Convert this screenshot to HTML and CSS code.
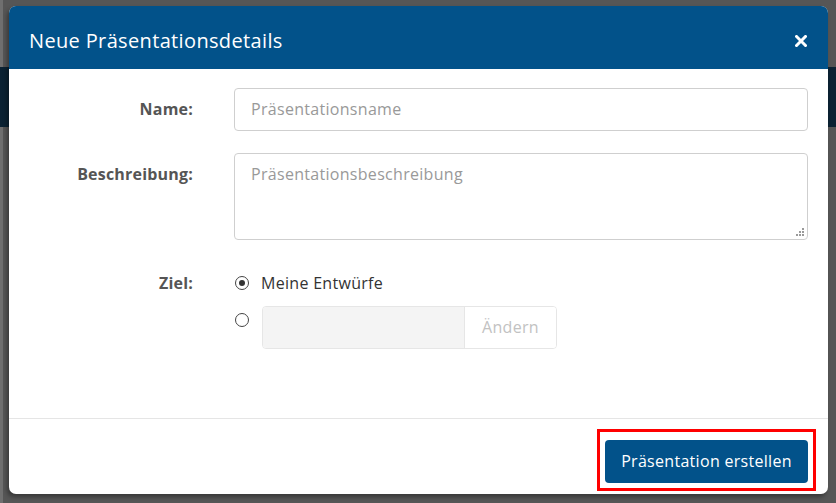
FILE: index.html
```html
<!DOCTYPE html>
<html lang="de">
<head>
<meta charset="utf-8">
<title>Neue Präsentationsdetails</title>
<link rel="stylesheet" href="styles.css">
</head>
<body>
<div class="page">
  <div class="page-topbar"></div>
  <div class="page-navbar"></div>
</div>
<div class="modal">
  <div class="modal-header">
    <h1 class="modal-title">Neue Präsentationsdetails</h1>
    <button class="modal-close" aria-label="Schließen">
      <svg width="12" height="12" viewBox="0 0 12 12"><path d="M1.5 1.5 L10.5 10.5 M10.5 1.5 L1.5 10.5" stroke="#fff" stroke-width="3" stroke-linecap="square"/></svg>
    </button>
  </div>
  <div class="modal-body">
    <label class="form-label label-name">Name:</label>
    <div class="field"><div class="input">Präsentationsname</div></div>

    <label class="form-label label-desc">Beschreibung:</label>
    <div class="field"><div class="textarea">Präsentationsbeschreibung<span class="grip">
      <svg width="8" height="8" viewBox="0 0 8 8"><g fill="#9a9a9a"><rect x="6" y="0" width="2" height="2"/><rect x="3" y="3" width="2" height="2"/><rect x="6" y="3" width="2" height="2"/><rect x="0" y="6" width="2" height="2"/><rect x="3" y="6" width="2" height="2"/><rect x="6" y="6" width="2" height="2"/></g></svg>
    </span></div></div>

    <label class="form-label label-ziel">Ziel:</label>
    <div class="field targets">
      <div class="radio-row">
        <span class="radio checked"></span>
        <span class="radio-text">Meine Entwürfe</span>
      </div>
      <div class="radio-row row-custom">
        <span class="radio"></span>
        <div class="input-group">
          <div class="ig-input"></div>
          <div class="ig-btn">Ändern</div>
        </div>
      </div>
    </div>
  </div>
  <div class="modal-footer">
    <div class="highlight">
      <button class="btn-primary">Präsentation erstellen</button>
    </div>
  </div>
</div>
</body>
</html>
```
FILE: styles.css
```css
* { box-sizing: border-box; }
html, body { margin: 0; padding: 0; }
body {
  width: 836px;
  height: 503px;
  overflow: hidden;
  background: #565656;
  box-shadow: inset 3px 0 0 #6f6f6f;
  font-family: "Open Sans", "Liberation Sans", sans-serif;
  position: relative;
}
.page { display: flex; flex-direction: column; }
.page-topbar { height: 67px; }
.page-navbar { height: 60px; background: #0b2233; }

.modal {
  position: absolute;
  left: 9px;
  top: 6px;
  width: 819px;
  height: 488px;
  background: #fff;
  border-radius: 7px;
  box-shadow: -2px 3px 4px rgba(0,0,0,0.35);
  display: flex;
  flex-direction: column;
  overflow: hidden;
}
.modal-header {
  height: 63px;
  background: #02528a;
  display: flex;
  align-items: center;
  justify-content: space-between;
  padding: 0 21px 0 20px;
  flex: none;
}
.modal-title {
  margin: 0;
  color: #fff;
  font-size: 20px;
  font-weight: 400;
  letter-spacing: 0.35px;
  padding-top: 5px;
}
.modal-close {
  background: none;
  border: 0;
  padding: 0;
  width: 12px;
  height: 12px;
  display: flex;
  margin-top: 6px;
}
.modal-body {
  flex: 1;
  display: grid;
  grid-template-columns: 184px 1fr;
  column-gap: 41px;
  row-gap: 22px;
  padding: 19px 20px 0 0;
  align-content: start;
}
.form-label {
  text-align: right;
  font-size: 16px;
  font-weight: 700;
  color: #555;
  letter-spacing: 0.2px;
}
.label-name { line-height: 43px; }
.label-desc { padding-top: 10px; line-height: 22px; }
.label-ziel { padding-top: 10px; line-height: 22px; }
.input, .textarea {
  border: 1px solid #cfcfcf;
  border-radius: 4px;
  color: #999;
  font-size: 16px;
  letter-spacing: 0.3px;
  padding: 0 16px;
}
.input { height: 43px; line-height: 41px; }
.textarea { height: 87px; padding-top: 9px; line-height: 22px; position: relative; }
.grip { position: absolute; right: 3px; bottom: 3px; display: flex; }
.targets { display: flex; flex-direction: column; padding-top: 10px; }
.radio-row { display: flex; align-items: center; }
.radio {
  width: 14px;
  height: 14px;
  border: 1.5px solid #444;
  border-radius: 50%;
  margin-left: 1px;
  display: flex;
  align-items: center;
  justify-content: center;
  flex: none;
}
.radio.checked::after {
  content: "";
  width: 6px;
  height: 6px;
  border-radius: 50%;
  background: #333;
}
.radio-text { margin-left: 12px; font-size: 16px; letter-spacing: 0.3px; color: #333; line-height: 22px; }
.row-custom { align-items: flex-start; margin-top: 12px; }
.row-custom .radio { margin-top: 7px; }
.input-group {
  margin-left: 13px;
  display: flex;
  width: 295px;
  height: 43px;
  border: 1px solid #e6e6e6;
  border-radius: 4px;
  overflow: hidden;
}
.ig-input { width: 202px; background: #f4f4f4; border-right: 1px solid #e6e6e6; }
.ig-btn {
  flex: 1;
  text-align: center;
  line-height: 41px;
  color: #c2c2c2;
  font-size: 16px;
  letter-spacing: 0.3px;
  background: #fff;
}
.modal-footer {
  flex: none;
  border-top: 1px solid #e5e5e5;
  padding: 21px 20px 11px 0;
  display: flex;
  justify-content: flex-end;
}
.highlight { position: relative; display: flex; }
.highlight::after {
  content: "";
  position: absolute;
  left: -8px;
  right: -8px;
  top: -11px;
  bottom: -8px;
  border: 3px solid #ff0000;
}
.btn-primary {
  width: 203px;
  height: 43px;
  background: #02528a;
  color: #fff;
  border: 0;
  border-radius: 4px;
  font-family: "Open Sans", "Liberation Sans", sans-serif;
  font-size: 16px;
  letter-spacing: 0.3px;
  padding: 0 0 2px 0;
}
```
